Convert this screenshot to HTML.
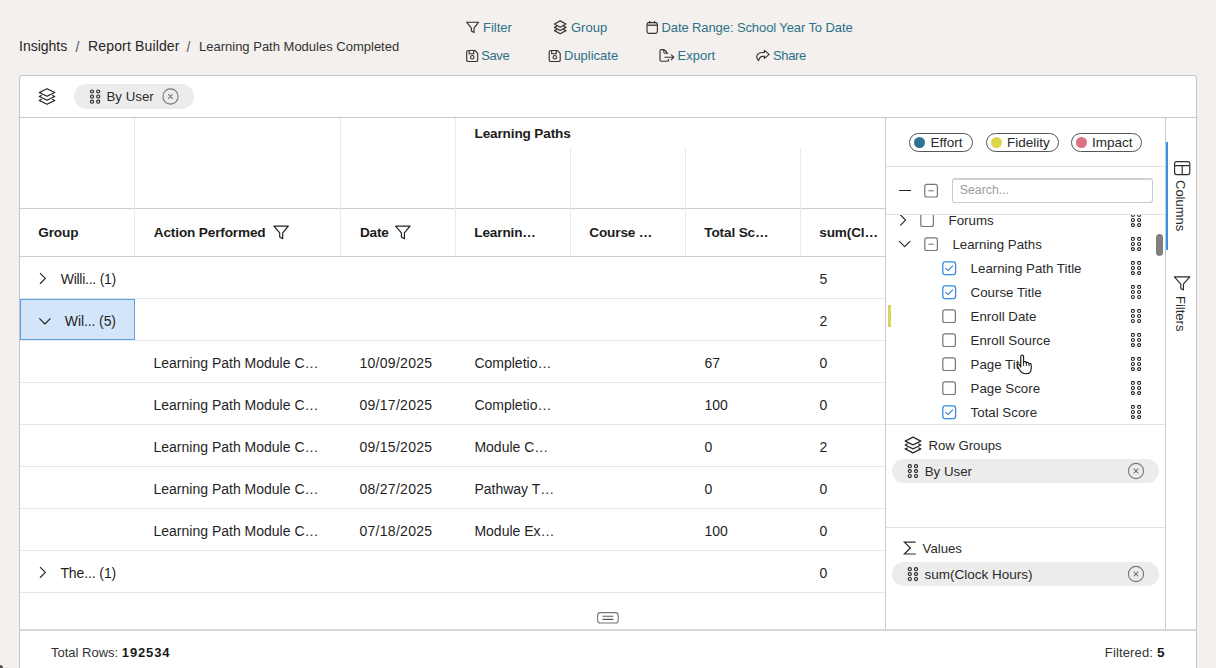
<!DOCTYPE html>
<html><head><meta charset="utf-8">
<style>
*{box-sizing:border-box;margin:0;padding:0}
html,body{width:1216px;height:668px;overflow:hidden}
body{background:#f3f0ed;font-family:"Liberation Sans",sans-serif;color:#222;position:relative}
.t{position:absolute;white-space:nowrap;line-height:1}
.abs{position:absolute}
svg{position:absolute;overflow:visible}
.lnk{color:#2c7189}
.hd{font-weight:bold;color:#1c1c1c;letter-spacing:-0.15px}
.cell{color:#1f1f1f}
.sp{color:#2a2a2a}
</style></head><body>

<div class="t " style="left:19px;top:39.25px;font-size:14px;color:#262626">Insights</div>
<div class="t " style="left:75.5px;top:39.55px;font-size:14px;color:#555">/</div>
<div class="t " style="left:88px;top:39.25px;font-size:14px;color:#262626;letter-spacing:0.15px">Report Builder</div>
<div class="t " style="left:186.5px;top:39.55px;font-size:14px;color:#555">/</div>
<div class="t " style="left:199px;top:40.40px;font-size:13px;color:#333">Learning Path Modules Completed</div>
<div class="t lnk" style="left:483px;top:20.90px;font-size:13px;">Filter</div>
<div class="t lnk" style="left:571px;top:20.90px;font-size:13px;">Group</div>
<div class="t lnk" style="left:661.5px;top:20.90px;font-size:13px;letter-spacing:-0.1px">Date Range: School Year To Date</div>
<div class="t lnk" style="left:481.2px;top:49.20px;font-size:13px;letter-spacing:-0.4px">Save</div>
<div class="t lnk" style="left:564px;top:49.20px;font-size:13px;">Duplicate</div>
<div class="t lnk" style="left:677.5px;top:49.20px;font-size:13px;">Export</div>
<div class="t lnk" style="left:773px;top:49.20px;font-size:13px;letter-spacing:-0.35px">Share</div>
<svg style="left:0;top:0" width="1" height="1"><path d="M466.6 22.2 H478.6 L474 28.2 V32.6 L471.4 31 V28.2 Z" fill="none" stroke="#333" stroke-width="1.15" stroke-linejoin="round"/></svg>
<svg style="left:0;top:0" width="1" height="1"><path d="M560.2 20.9 L565.9 24.049999999999997 L560.2 27.2 L554.5 24.049999999999997 Z M556.5 26.24473684210526 L554.5 27.349999999999998 L560.2 30.5 L565.9 27.349999999999998 L563.9 26.24473684210526 M556.5 29.544736842105262 L554.5 30.65 L560.2 33.8 L565.9 30.65 L563.9 29.544736842105262" fill="none" stroke="#333" stroke-width="1.2" stroke-linejoin="round" stroke-linecap="round"/></svg>
<svg style="left:0;top:0" width="1" height="1"><rect x="647" y="22.6" width="10.4" height="10.8" rx="1.8" fill="none" stroke="#333" stroke-width="1.15"/><path d="M647.2 25.2 H657.2" stroke="#333" stroke-width="1.3"/><path d="M649.8 21 V23.2 M654.6 21 V23.2" stroke="#333" stroke-width="1.1"/></svg>
<svg style="left:0;top:0" width="1" height="1"><path d="M468.5 50.5 H474.9 L477.7 53.3 V59.9 Q477.7 61.5 476.09999999999997 61.5 H468.3 Q466.7 61.5 466.7 59.9 V52.1 Q466.7 50.5 468.5 50.5 Z" fill="none" stroke="#333" stroke-width="1.15" stroke-linejoin="round"/><path d="M469.2 50.7 V53.7 H473.7 V50.7" fill="none" stroke="#333" stroke-width="1.1"/><circle cx="472.3" cy="57.3" r="1.75" fill="none" stroke="#333" stroke-width="1.1"/></svg>
<svg style="left:0;top:0" width="1" height="1"><path d="M551.0 50.5 H557.4000000000001 L560.2 53.3 V59.9 Q560.2 61.5 558.6 61.5 H550.8000000000001 Q549.2 61.5 549.2 59.9 V52.1 Q549.2 50.5 551.0 50.5 Z" fill="none" stroke="#333" stroke-width="1.15" stroke-linejoin="round"/><path d="M551.7 50.7 V53.7 H556.2 V50.7" fill="none" stroke="#333" stroke-width="1.1"/><circle cx="554.8000000000001" cy="57.3" r="1.75" fill="none" stroke="#333" stroke-width="1.1"/></svg>
<svg style="left:0;top:0" width="1" height="1"><path d="M666.5 53.2 V51.8 L664 49.6 H661.4 Q660 49.6 660 51 V59.8 Q660 61.2 661.4 61.2 H667.2 Q668.6 61.2 668.6 59.8 V59" fill="none" stroke="#333" stroke-width="1.15" stroke-linejoin="round"/><path d="M663.8 49.8 V52 Q663.8 53.2 665 53.2 H668.4" fill="none" stroke="#333" stroke-width="1.1"/><path d="M665 57.2 H673.6 M671.4 54.8 L673.8 57.2 L671.4 59.6" fill="none" stroke="#333" stroke-width="1.15" stroke-linecap="round" stroke-linejoin="round"/></svg>
<svg style="left:0;top:0" width="1" height="1"><path d="M764.4 50.4 L769.2 54.4 L764.4 58.4 V56.3 H762.6 Q759.6 56.3 758.6 60.6 Q756.2 58.4 756.9 55.8 Q757.9 52.5 762.6 52.5 H764.4 Z" fill="none" stroke="#333" stroke-width="1.15" stroke-linejoin="round"/></svg>
<div class="abs" style="left:19px;top:75px;width:1178px;height:620px;background:#fff;border:1px solid #c3c5ca;border-radius:3px"></div>
<div class="abs" style="left:20px;top:117px;width:1176px;height:1px;background:#c8c9cc"></div>
<svg style="left:0;top:0" width="1" height="1"><path d="M47.0 88.7 L54.699999999999996 92.5 L47.0 96.3 L39.3 92.5 Z M41.3 95.51298701298701 L39.3 96.5 L47.0 100.3 L54.699999999999996 96.5 L52.699999999999996 95.51298701298701 M41.3 99.51298701298701 L39.3 100.5 L47.0 104.3 L54.699999999999996 100.5 L52.699999999999996 99.51298701298701" fill="none" stroke="#222" stroke-width="1.2" stroke-linejoin="round" stroke-linecap="round"/></svg>
<div class="abs" style="left:74px;top:84px;width:120px;height:25px;border-radius:12.5px;background:#ececec"></div>
<svg style="left:0;top:0" width="1" height="1"><circle cx="92.0" cy="91.5" r="1.55" fill="none" stroke="#2a2a2a" stroke-width="1.15"/><circle cx="92.0" cy="96.6" r="1.55" fill="none" stroke="#2a2a2a" stroke-width="1.15"/><circle cx="92.0" cy="101.7" r="1.55" fill="none" stroke="#2a2a2a" stroke-width="1.15"/><circle cx="98.2" cy="91.5" r="1.55" fill="none" stroke="#2a2a2a" stroke-width="1.15"/><circle cx="98.2" cy="96.6" r="1.55" fill="none" stroke="#2a2a2a" stroke-width="1.15"/><circle cx="98.2" cy="101.7" r="1.55" fill="none" stroke="#2a2a2a" stroke-width="1.15"/></svg>
<div class="t " style="left:106.5px;top:90.24px;font-size:13.3px;color:#2a2a2a">By User</div>
<svg style="left:0;top:0" width="1" height="1"><circle cx="170.5" cy="96.5" r="7.6" fill="none" stroke="#777" stroke-width="1.1"/><path d="M168.2 94.2 L172.8 98.8 M172.8 94.2 L168.2 98.8" stroke="#777" stroke-width="1.1"/></svg>
<div class="abs" style="left:20px;top:208px;width:865px;height:1px;background:#cdced4"></div>
<div class="abs" style="left:20px;top:256px;width:865px;height:1px;background:#cdced4"></div>
<div class="abs" style="left:134px;top:118px;width:1px;height:138px;background:#eaeaee"></div>
<div class="abs" style="left:340px;top:118px;width:1px;height:138px;background:#eaeaee"></div>
<div class="abs" style="left:455px;top:118px;width:1px;height:138px;background:#eaeaee"></div>
<div class="abs" style="left:570px;top:148px;width:1px;height:108px;background:#eaeaee"></div>
<div class="abs" style="left:685px;top:148px;width:1px;height:108px;background:#eaeaee"></div>
<div class="abs" style="left:800px;top:148px;width:1px;height:108px;background:#eaeaee"></div>
<div class="t hd" style="left:474.5px;top:126.69px;font-size:13.6px;">Learning Paths</div>
<div class="t hd" style="left:38.3px;top:226.29px;font-size:13.6px;">Group</div>
<div class="t hd" style="left:153.8px;top:226.29px;font-size:13.6px;">Action Performed</div>
<div class="t hd" style="left:359.9px;top:226.29px;font-size:13.6px;">Date</div>
<div class="t hd" style="left:474.3px;top:226.29px;font-size:13.6px;">Learnin…</div>
<div class="t hd" style="left:589.3px;top:226.29px;font-size:13.6px;">Course …</div>
<div class="t hd" style="left:704.3px;top:226.29px;font-size:13.6px;">Total Sc…</div>
<div class="t hd" style="left:819.3px;top:226.29px;font-size:13.6px;">sum(Cl…</div>
<svg style="left:0;top:0" width="1" height="1"><path d="M273.90000000000003 226.10000000000002 H288.3 L282.7 232.9 V238.70000000000002 L279.7 236.9 V232.9 Z" fill="none" stroke="#222" stroke-width="1.2" stroke-linejoin="round"/></svg>
<svg style="left:0;top:0" width="1" height="1"><path d="M395.6 226.10000000000002 H410.0 L404.4 232.9 V238.70000000000002 L401.4 236.9 V232.9 Z" fill="none" stroke="#222" stroke-width="1.2" stroke-linejoin="round"/></svg>
<div class="abs" style="left:20px;top:298px;width:865px;height:1px;background:#e3e6ec"></div>
<div class="abs" style="left:20px;top:340px;width:865px;height:1px;background:#e3e6ec"></div>
<div class="abs" style="left:20px;top:382px;width:865px;height:1px;background:#e3e6ec"></div>
<div class="abs" style="left:20px;top:424px;width:865px;height:1px;background:#e3e6ec"></div>
<div class="abs" style="left:20px;top:466px;width:865px;height:1px;background:#e3e6ec"></div>
<div class="abs" style="left:20px;top:508px;width:865px;height:1px;background:#e3e6ec"></div>
<div class="abs" style="left:20px;top:550px;width:865px;height:1px;background:#e3e6ec"></div>
<div class="abs" style="left:20px;top:592px;width:865px;height:1px;background:#e3e6ec"></div>
<div class="abs" style="left:20px;top:299px;width:115px;height:41px;background:#d3e5f8;border:1px solid #5d9fe3"></div>
<svg style="left:0;top:0" width="1" height="1"><path d="M40.3 273.3 L45.3 278.40000000000003 L40.3 283.5" fill="none" stroke="#222" stroke-width="1.1" stroke-linecap="round" stroke-linejoin="round"/></svg>
<div class="t cell" style="left:60.7px;top:271.75px;font-size:14px;letter-spacing:-0.25px">Willi... (1)</div>
<div class="t cell" style="left:819.5px;top:271.75px;font-size:14px;">5</div>
<svg style="left:0;top:0" width="1" height="1"><path d="M39.6 318.6 L44.9 324.0 L50.2 318.6" fill="none" stroke="#222" stroke-width="1.1" stroke-linecap="round" stroke-linejoin="round"/></svg>
<div class="t cell" style="left:64.8px;top:313.75px;font-size:14px;letter-spacing:-0.1px">Wil... (5)</div>
<div class="t cell" style="left:819.5px;top:313.75px;font-size:14px;">2</div>
<div class="t cell" style="left:153.5px;top:355.75px;font-size:14px;">Learning Path Module C…</div>
<div class="t cell" style="left:359.4px;top:355.75px;font-size:14px;letter-spacing:0.3px">10/09/2025</div>
<div class="t cell" style="left:474.4px;top:355.75px;font-size:14px;">Completio…</div>
<div class="t cell" style="left:704.4px;top:355.75px;font-size:14px;">67</div>
<div class="t cell" style="left:819.5px;top:355.75px;font-size:14px;">0</div>
<div class="t cell" style="left:153.5px;top:397.75px;font-size:14px;">Learning Path Module C…</div>
<div class="t cell" style="left:359.4px;top:397.75px;font-size:14px;letter-spacing:0.3px">09/17/2025</div>
<div class="t cell" style="left:474.4px;top:397.75px;font-size:14px;">Completio…</div>
<div class="t cell" style="left:704.4px;top:397.75px;font-size:14px;">100</div>
<div class="t cell" style="left:819.5px;top:397.75px;font-size:14px;">0</div>
<div class="t cell" style="left:153.5px;top:439.75px;font-size:14px;">Learning Path Module C…</div>
<div class="t cell" style="left:359.4px;top:439.75px;font-size:14px;letter-spacing:0.3px">09/15/2025</div>
<div class="t cell" style="left:474.4px;top:439.75px;font-size:14px;">Module C…</div>
<div class="t cell" style="left:704.4px;top:439.75px;font-size:14px;">0</div>
<div class="t cell" style="left:819.5px;top:439.75px;font-size:14px;">2</div>
<div class="t cell" style="left:153.5px;top:481.75px;font-size:14px;">Learning Path Module C…</div>
<div class="t cell" style="left:359.4px;top:481.75px;font-size:14px;letter-spacing:0.3px">08/27/2025</div>
<div class="t cell" style="left:474.4px;top:481.75px;font-size:14px;">Pathway T…</div>
<div class="t cell" style="left:704.4px;top:481.75px;font-size:14px;">0</div>
<div class="t cell" style="left:819.5px;top:481.75px;font-size:14px;">0</div>
<div class="t cell" style="left:153.5px;top:523.75px;font-size:14px;">Learning Path Module C…</div>
<div class="t cell" style="left:359.4px;top:523.75px;font-size:14px;letter-spacing:0.3px">07/18/2025</div>
<div class="t cell" style="left:474.4px;top:523.75px;font-size:14px;">Module Ex…</div>
<div class="t cell" style="left:704.4px;top:523.75px;font-size:14px;">100</div>
<div class="t cell" style="left:819.5px;top:523.75px;font-size:14px;">0</div>
<svg style="left:0;top:0" width="1" height="1"><path d="M40.3 567.3 L45.3 572.4 L40.3 577.5" fill="none" stroke="#222" stroke-width="1.1" stroke-linecap="round" stroke-linejoin="round"/></svg>
<div class="t cell" style="left:60.4px;top:565.75px;font-size:14px;letter-spacing:-0.1px">The... (1)</div>
<div class="t cell" style="left:819.5px;top:565.75px;font-size:14px;">0</div>
<svg style="left:0;top:0" width="1" height="1"><rect x="597.6" y="612.6" width="20.6" height="10.4" rx="2.8" fill="#fff" stroke="#777" stroke-width="1.1"/><path d="M602.5 616.2 H613.3 M602.5 619.4 H613.3" stroke="#555" stroke-width="1.1"/></svg>
<div class="abs" style="left:20px;top:629px;width:1176px;height:2px;background:#d9dadf"></div>
<div class="t " style="left:51px;top:645.80px;font-size:13px;color:#333">Total Rows: <b style="color:#1a1a1a;letter-spacing:0.85px">192534</b></div>
<div class="t " style="left:1104.8px;top:645.80px;font-size:13px;color:#333;letter-spacing:0.15px">Filtered: <b style="color:#1a1a1a;font-size:13.6px">5</b></div>
<div class="abs" style="left:885px;top:118px;width:1px;height:511px;background:#c9cacd"></div>
<div class="abs" style="left:1165px;top:118px;width:1px;height:511px;background:#c9cacd"></div>
<div class="abs" style="left:886px;top:166px;width:279px;height:1px;background:#dde1e8"></div>
<div class="abs" style="left:886px;top:214px;width:279px;height:1px;background:#dde1e8"></div>
<div class="abs" style="left:886px;top:424px;width:279px;height:1px;background:#dde1e8"></div>
<div class="abs" style="left:886px;top:527px;width:279px;height:1px;background:#dde1e8"></div>
<div class="abs" style="left:909px;top:133px;width:64px;height:19px;border:1px solid #555;border-radius:9.5px"></div>
<div class="abs" style="left:914px;top:137px;width:11px;height:11px;border-radius:50%;background:#2f7390"></div>
<div class="t " style="left:930.5px;top:135.77px;font-size:13.5px;color:#2a2a2a">Effort</div>
<div class="abs" style="left:985.5px;top:133px;width:73px;height:19px;border:1px solid #555;border-radius:9.5px"></div>
<div class="abs" style="left:990.5px;top:137px;width:11px;height:11px;border-radius:50%;background:#dcd74a"></div>
<div class="t " style="left:1007.0px;top:135.77px;font-size:13.5px;color:#2a2a2a">Fidelity</div>
<div class="abs" style="left:1070.5px;top:133px;width:71.5px;height:19px;border:1px solid #555;border-radius:9.5px"></div>
<div class="abs" style="left:1075.5px;top:137px;width:11px;height:11px;border-radius:50%;background:#dc7280"></div>
<div class="t " style="left:1092.0px;top:135.77px;font-size:13.5px;color:#2a2a2a">Impact</div>
<div class="abs" style="left:898.6px;top:189.8px;width:12.8px;height:1.2px;background:#222"></div>
<svg style="left:0;top:0" width="1" height="1"><rect x="924.8000000000001" y="184.4" width="12.6" height="12.6" rx="2" fill="#fff" stroke="#777" stroke-width="1.2"/><path d="M928.4000000000001 190.70000000000002 H933.8000000000001" stroke="#888" stroke-width="1.2"/></svg>
<div class="abs" style="left:952px;top:178px;width:201px;height:24.6px;border:1.5px solid #c9cace;border-top:2px solid #d0d2d4;border-radius:3px;background:#fff"></div>
<div class="t " style="left:959.8px;top:184.49px;font-size:12.3px;color:#9d9d9d">Search...</div>
<div class="abs" style="left:886px;top:215px;width:279px;height:209px;overflow:hidden">
<div class="t sp" style="left:62.60000000000002px;top:-1.36px;font-size:13.3px;">Forums</div>
<svg style="left:0;top:0" width="1" height="1"><rect x="34.80000000000005" y="-1.0999999999999885" width="12.6" height="12.6" rx="2" fill="#fff" stroke="#777" stroke-width="1.2"/></svg>
<svg style="left:0;top:0" width="1" height="1"><path d="M14.600000000000023 0.0 L19.600000000000023 5.1 L14.600000000000023 10.2" fill="none" stroke="#222" stroke-width="1.1" stroke-linecap="round" stroke-linejoin="round"/></svg>
<svg style="left:0;top:0" width="1" height="1"><circle cx="246.9000000000001" cy="-0.09999999999999432" r="1.55" fill="none" stroke="#2a2a2a" stroke-width="1.15"/><circle cx="246.9000000000001" cy="5.000000000000005" r="1.55" fill="none" stroke="#2a2a2a" stroke-width="1.15"/><circle cx="246.9000000000001" cy="10.100000000000005" r="1.55" fill="none" stroke="#2a2a2a" stroke-width="1.15"/><circle cx="253.10000000000008" cy="-0.09999999999999432" r="1.55" fill="none" stroke="#2a2a2a" stroke-width="1.15"/><circle cx="253.10000000000008" cy="5.000000000000005" r="1.55" fill="none" stroke="#2a2a2a" stroke-width="1.15"/><circle cx="253.10000000000008" cy="10.100000000000005" r="1.55" fill="none" stroke="#2a2a2a" stroke-width="1.15"/></svg>
<div class="t sp" style="left:66.39999999999998px;top:22.64px;font-size:13.3px;">Learning Paths</div>
<svg style="left:0;top:0" width="1" height="1"><rect x="38.80000000000005" y="22.900000000000013" width="12.6" height="12.6" rx="2" fill="#fff" stroke="#777" stroke-width="1.2"/><path d="M42.40000000000005 29.20000000000001 H47.80000000000005" stroke="#888" stroke-width="1.2"/></svg>
<svg style="left:0;top:0" width="1" height="1"><path d="M13.399999999999977 26.30000000000001 L18.699999999999978 31.70000000000001 L23.99999999999998 26.30000000000001" fill="none" stroke="#222" stroke-width="1.1" stroke-linecap="round" stroke-linejoin="round"/></svg>
<svg style="left:0;top:0" width="1" height="1"><circle cx="246.9000000000001" cy="23.900000000000006" r="1.55" fill="none" stroke="#2a2a2a" stroke-width="1.15"/><circle cx="246.9000000000001" cy="29.000000000000007" r="1.55" fill="none" stroke="#2a2a2a" stroke-width="1.15"/><circle cx="246.9000000000001" cy="34.10000000000001" r="1.55" fill="none" stroke="#2a2a2a" stroke-width="1.15"/><circle cx="253.10000000000008" cy="23.900000000000006" r="1.55" fill="none" stroke="#2a2a2a" stroke-width="1.15"/><circle cx="253.10000000000008" cy="29.000000000000007" r="1.55" fill="none" stroke="#2a2a2a" stroke-width="1.15"/><circle cx="253.10000000000008" cy="34.10000000000001" r="1.55" fill="none" stroke="#2a2a2a" stroke-width="1.15"/></svg>
<div class="t sp" style="left:84.60000000000002px;top:46.64px;font-size:13.3px;">Learning Path Title</div>
<svg style="left:0;top:0" width="1" height="1"><rect x="56.80000000000005" y="46.899999999999956" width="12.8" height="12.8" rx="2.4" fill="#fff" stroke="#3a8de0" stroke-width="1.3"/><path d="M59.700000000000045 53.299999999999955 L62.200000000000045 55.59999999999995 L66.60000000000005 50.899999999999956" fill="none" stroke="#2f78c4" stroke-width="1.1" stroke-linecap="round" stroke-linejoin="round"/></svg>
<svg style="left:0;top:0" width="1" height="1"><circle cx="246.9000000000001" cy="47.89999999999998" r="1.55" fill="none" stroke="#2a2a2a" stroke-width="1.15"/><circle cx="246.9000000000001" cy="52.99999999999998" r="1.55" fill="none" stroke="#2a2a2a" stroke-width="1.15"/><circle cx="246.9000000000001" cy="58.09999999999998" r="1.55" fill="none" stroke="#2a2a2a" stroke-width="1.15"/><circle cx="253.10000000000008" cy="47.89999999999998" r="1.55" fill="none" stroke="#2a2a2a" stroke-width="1.15"/><circle cx="253.10000000000008" cy="52.99999999999998" r="1.55" fill="none" stroke="#2a2a2a" stroke-width="1.15"/><circle cx="253.10000000000008" cy="58.09999999999998" r="1.55" fill="none" stroke="#2a2a2a" stroke-width="1.15"/></svg>
<div class="t sp" style="left:84.60000000000002px;top:70.64px;font-size:13.3px;">Course Title</div>
<svg style="left:0;top:0" width="1" height="1"><rect x="56.80000000000005" y="70.89999999999995" width="12.8" height="12.8" rx="2.4" fill="#fff" stroke="#3a8de0" stroke-width="1.3"/><path d="M59.700000000000045 77.29999999999995 L62.200000000000045 79.59999999999995 L66.60000000000005 74.89999999999995" fill="none" stroke="#2f78c4" stroke-width="1.1" stroke-linecap="round" stroke-linejoin="round"/></svg>
<svg style="left:0;top:0" width="1" height="1"><circle cx="246.9000000000001" cy="71.89999999999998" r="1.55" fill="none" stroke="#2a2a2a" stroke-width="1.15"/><circle cx="246.9000000000001" cy="76.99999999999997" r="1.55" fill="none" stroke="#2a2a2a" stroke-width="1.15"/><circle cx="246.9000000000001" cy="82.09999999999998" r="1.55" fill="none" stroke="#2a2a2a" stroke-width="1.15"/><circle cx="253.10000000000008" cy="71.89999999999998" r="1.55" fill="none" stroke="#2a2a2a" stroke-width="1.15"/><circle cx="253.10000000000008" cy="76.99999999999997" r="1.55" fill="none" stroke="#2a2a2a" stroke-width="1.15"/><circle cx="253.10000000000008" cy="82.09999999999998" r="1.55" fill="none" stroke="#2a2a2a" stroke-width="1.15"/></svg>
<div class="t sp" style="left:84.60000000000002px;top:94.64px;font-size:13.3px;">Enroll Date</div>
<svg style="left:0;top:0" width="1" height="1"><rect x="56.80000000000005" y="94.89999999999995" width="12.6" height="12.6" rx="2" fill="#fff" stroke="#777" stroke-width="1.2"/></svg>
<svg style="left:0;top:0" width="1" height="1"><circle cx="246.9000000000001" cy="95.89999999999998" r="1.55" fill="none" stroke="#2a2a2a" stroke-width="1.15"/><circle cx="246.9000000000001" cy="100.99999999999997" r="1.55" fill="none" stroke="#2a2a2a" stroke-width="1.15"/><circle cx="246.9000000000001" cy="106.09999999999998" r="1.55" fill="none" stroke="#2a2a2a" stroke-width="1.15"/><circle cx="253.10000000000008" cy="95.89999999999998" r="1.55" fill="none" stroke="#2a2a2a" stroke-width="1.15"/><circle cx="253.10000000000008" cy="100.99999999999997" r="1.55" fill="none" stroke="#2a2a2a" stroke-width="1.15"/><circle cx="253.10000000000008" cy="106.09999999999998" r="1.55" fill="none" stroke="#2a2a2a" stroke-width="1.15"/></svg>
<div class="t sp" style="left:84.60000000000002px;top:118.64px;font-size:13.3px;">Enroll Source</div>
<svg style="left:0;top:0" width="1" height="1"><rect x="56.80000000000005" y="118.89999999999995" width="12.6" height="12.6" rx="2" fill="#fff" stroke="#777" stroke-width="1.2"/></svg>
<svg style="left:0;top:0" width="1" height="1"><circle cx="246.9000000000001" cy="119.89999999999998" r="1.55" fill="none" stroke="#2a2a2a" stroke-width="1.15"/><circle cx="246.9000000000001" cy="124.99999999999997" r="1.55" fill="none" stroke="#2a2a2a" stroke-width="1.15"/><circle cx="246.9000000000001" cy="130.09999999999997" r="1.55" fill="none" stroke="#2a2a2a" stroke-width="1.15"/><circle cx="253.10000000000008" cy="119.89999999999998" r="1.55" fill="none" stroke="#2a2a2a" stroke-width="1.15"/><circle cx="253.10000000000008" cy="124.99999999999997" r="1.55" fill="none" stroke="#2a2a2a" stroke-width="1.15"/><circle cx="253.10000000000008" cy="130.09999999999997" r="1.55" fill="none" stroke="#2a2a2a" stroke-width="1.15"/></svg>
<div class="t sp" style="left:84.60000000000002px;top:142.64px;font-size:13.3px;">Page Title</div>
<svg style="left:0;top:0" width="1" height="1"><rect x="56.80000000000005" y="142.89999999999995" width="12.6" height="12.6" rx="2" fill="#fff" stroke="#777" stroke-width="1.2"/></svg>
<svg style="left:0;top:0" width="1" height="1"><circle cx="246.9000000000001" cy="143.89999999999998" r="1.55" fill="none" stroke="#2a2a2a" stroke-width="1.15"/><circle cx="246.9000000000001" cy="148.99999999999997" r="1.55" fill="none" stroke="#2a2a2a" stroke-width="1.15"/><circle cx="246.9000000000001" cy="154.09999999999997" r="1.55" fill="none" stroke="#2a2a2a" stroke-width="1.15"/><circle cx="253.10000000000008" cy="143.89999999999998" r="1.55" fill="none" stroke="#2a2a2a" stroke-width="1.15"/><circle cx="253.10000000000008" cy="148.99999999999997" r="1.55" fill="none" stroke="#2a2a2a" stroke-width="1.15"/><circle cx="253.10000000000008" cy="154.09999999999997" r="1.55" fill="none" stroke="#2a2a2a" stroke-width="1.15"/></svg>
<div class="t sp" style="left:84.60000000000002px;top:166.64px;font-size:13.3px;">Page Score</div>
<svg style="left:0;top:0" width="1" height="1"><rect x="56.80000000000005" y="166.89999999999995" width="12.6" height="12.6" rx="2" fill="#fff" stroke="#777" stroke-width="1.2"/></svg>
<svg style="left:0;top:0" width="1" height="1"><circle cx="246.9000000000001" cy="167.89999999999998" r="1.55" fill="none" stroke="#2a2a2a" stroke-width="1.15"/><circle cx="246.9000000000001" cy="172.99999999999997" r="1.55" fill="none" stroke="#2a2a2a" stroke-width="1.15"/><circle cx="246.9000000000001" cy="178.09999999999997" r="1.55" fill="none" stroke="#2a2a2a" stroke-width="1.15"/><circle cx="253.10000000000008" cy="167.89999999999998" r="1.55" fill="none" stroke="#2a2a2a" stroke-width="1.15"/><circle cx="253.10000000000008" cy="172.99999999999997" r="1.55" fill="none" stroke="#2a2a2a" stroke-width="1.15"/><circle cx="253.10000000000008" cy="178.09999999999997" r="1.55" fill="none" stroke="#2a2a2a" stroke-width="1.15"/></svg>
<div class="t sp" style="left:84.60000000000002px;top:190.64px;font-size:13.3px;">Total Score</div>
<svg style="left:0;top:0" width="1" height="1"><rect x="56.80000000000005" y="190.89999999999995" width="12.8" height="12.8" rx="2.4" fill="#fff" stroke="#3a8de0" stroke-width="1.3"/><path d="M59.700000000000045 197.29999999999995 L62.200000000000045 199.59999999999997 L66.60000000000005 194.89999999999995" fill="none" stroke="#2f78c4" stroke-width="1.1" stroke-linecap="round" stroke-linejoin="round"/></svg>
<svg style="left:0;top:0" width="1" height="1"><circle cx="246.9000000000001" cy="191.89999999999998" r="1.55" fill="none" stroke="#2a2a2a" stroke-width="1.15"/><circle cx="246.9000000000001" cy="196.99999999999997" r="1.55" fill="none" stroke="#2a2a2a" stroke-width="1.15"/><circle cx="246.9000000000001" cy="202.09999999999997" r="1.55" fill="none" stroke="#2a2a2a" stroke-width="1.15"/><circle cx="253.10000000000008" cy="191.89999999999998" r="1.55" fill="none" stroke="#2a2a2a" stroke-width="1.15"/><circle cx="253.10000000000008" cy="196.99999999999997" r="1.55" fill="none" stroke="#2a2a2a" stroke-width="1.15"/><circle cx="253.10000000000008" cy="202.09999999999997" r="1.55" fill="none" stroke="#2a2a2a" stroke-width="1.15"/></svg>
</div>
<div class="abs" style="left:1156px;top:234px;width:7px;height:22px;border-radius:3.5px;background:#7f7f7f"></div>
<div class="abs" style="left:888px;top:305px;width:3px;height:21.5px;background:#d9d55c"></div>
<svg style="left:0;top:0" width="1" height="1"><path d="M913.0 437.2 L920.8000000000001 441.05 L913.0 444.9 L905.2 441.05 Z M907.2 444.0128205128205 L905.2 445.0 L913.0 448.84999999999997 L920.8000000000001 445.0 L918.8000000000001 444.0128205128205 M907.2 447.9628205128205 L905.2 448.95 L913.0 452.79999999999995 L920.8000000000001 448.95 L918.8000000000001 447.9628205128205" fill="none" stroke="#2a2a2a" stroke-width="1.3" stroke-linejoin="round" stroke-linecap="round"/></svg>
<div class="t sp" style="left:928.4px;top:438.53px;font-size:13.2px;">Row Groups</div>
<div class="abs" style="left:892px;top:459px;width:267px;height:24px;border-radius:12px;background:#ececec"></div>
<svg style="left:0;top:0" width="1" height="1"><circle cx="909.8" cy="466.2" r="1.55" fill="none" stroke="#2a2a2a" stroke-width="1.15"/><circle cx="909.8" cy="471.09999999999997" r="1.55" fill="none" stroke="#2a2a2a" stroke-width="1.15"/><circle cx="909.8" cy="476.0" r="1.55" fill="none" stroke="#2a2a2a" stroke-width="1.15"/><circle cx="916.0" cy="466.2" r="1.55" fill="none" stroke="#2a2a2a" stroke-width="1.15"/><circle cx="916.0" cy="471.09999999999997" r="1.55" fill="none" stroke="#2a2a2a" stroke-width="1.15"/><circle cx="916.0" cy="476.0" r="1.55" fill="none" stroke="#2a2a2a" stroke-width="1.15"/></svg>
<div class="t sp" style="left:924.7px;top:465.14px;font-size:13.3px;">By User</div>
<svg style="left:0;top:0" width="1" height="1"><circle cx="1136" cy="471" r="7.6" fill="none" stroke="#777" stroke-width="1.1"/><path d="M1133.7 468.7 L1138.3 473.3 M1138.3 468.7 L1133.7 473.3" stroke="#777" stroke-width="1.1"/></svg>
<svg style="left:0;top:0" width="1" height="1"><path d="M915.6 542.2 H904.4 L910.4 548 L904.4 554 H915.8" fill="none" stroke="#2a2a2a" stroke-width="1.2" stroke-linejoin="miter"/></svg>
<div class="t sp" style="left:922.6px;top:541.83px;font-size:13.2px;">Values</div>
<div class="abs" style="left:892px;top:562px;width:267px;height:24px;border-radius:12px;background:#ececec"></div>
<svg style="left:0;top:0" width="1" height="1"><circle cx="909.8" cy="569.2" r="1.55" fill="none" stroke="#2a2a2a" stroke-width="1.15"/><circle cx="909.8" cy="574.1" r="1.55" fill="none" stroke="#2a2a2a" stroke-width="1.15"/><circle cx="909.8" cy="579.0" r="1.55" fill="none" stroke="#2a2a2a" stroke-width="1.15"/><circle cx="916.0" cy="569.2" r="1.55" fill="none" stroke="#2a2a2a" stroke-width="1.15"/><circle cx="916.0" cy="574.1" r="1.55" fill="none" stroke="#2a2a2a" stroke-width="1.15"/><circle cx="916.0" cy="579.0" r="1.55" fill="none" stroke="#2a2a2a" stroke-width="1.15"/></svg>
<div class="t sp" style="left:924.5px;top:567.97px;font-size:13.5px;">sum(Clock Hours)</div>
<svg style="left:0;top:0" width="1" height="1"><circle cx="1136" cy="574" r="7.6" fill="none" stroke="#777" stroke-width="1.1"/><path d="M1133.7 571.7 L1138.3 576.3 M1138.3 571.7 L1133.7 576.3" stroke="#777" stroke-width="1.1"/></svg>
<div class="abs" style="left:1166px;top:141.5px;width:2.2px;height:108px;background:#3d8fe0"></div>
<svg style="left:0;top:0" width="1" height="1"><rect x="1174.6" y="161.6" width="15.2" height="13" rx="2" fill="none" stroke="#2a2a2a" stroke-width="1.15"/><path d="M1174.8 165.6 H1189.6 M1182.2 165.6 V174.4" stroke="#2a2a2a" stroke-width="1.15"/></svg>
<div class="t" style="left:1174px;top:179.8px;font-size:13px;color:#2a2a2a;writing-mode:vertical-rl">Columns</div>
<svg style="left:0;top:0" width="1" height="1"><path d="M1174.4 276.8 H1189.8 L1183.4 284.2 V290 L1180.8 288.4 V284.2 Z" fill="none" stroke="#2a2a2a" stroke-width="1.15" stroke-linejoin="round"/></svg>
<div class="t" style="left:1174px;top:295.5px;font-size:13px;color:#2a2a2a;writing-mode:vertical-rl">Filters</div>
<svg style="left:0;top:0" width="1" height="1"><path d="M1019.3 369.5 L1017.4 366.2 Q1016.6 364.6 1018 364.2 Q1019 364 1019.8 365.4 L1020.8 367 V356.6 Q1020.8 355 1022.2 355 Q1023.6 355 1023.6 356.6 V362.4 Q1024.2 361.4 1025.3 361.6 Q1026.3 361.8 1026.4 363 Q1027 362.2 1028 362.5 Q1028.9 362.8 1029 363.8 Q1029.6 363.2 1030.4 363.6 Q1031.2 364 1031.2 365.2 V368.4 Q1031.2 373.8 1026 373.8 Q1021.8 373.8 1019.3 369.5 Z" fill="#fff" stroke="#111" stroke-width="1.1" stroke-linejoin="round"/><path d="M1023.6 362.4 V366 M1026.4 363 V366 M1029 363.8 V366.2" stroke="#111" stroke-width="0.9"/></svg>
<div class="abs" style="left:-3px;top:664.5px;width:6px;height:6px;border-radius:50%;background:#555"></div>
</body></html>
